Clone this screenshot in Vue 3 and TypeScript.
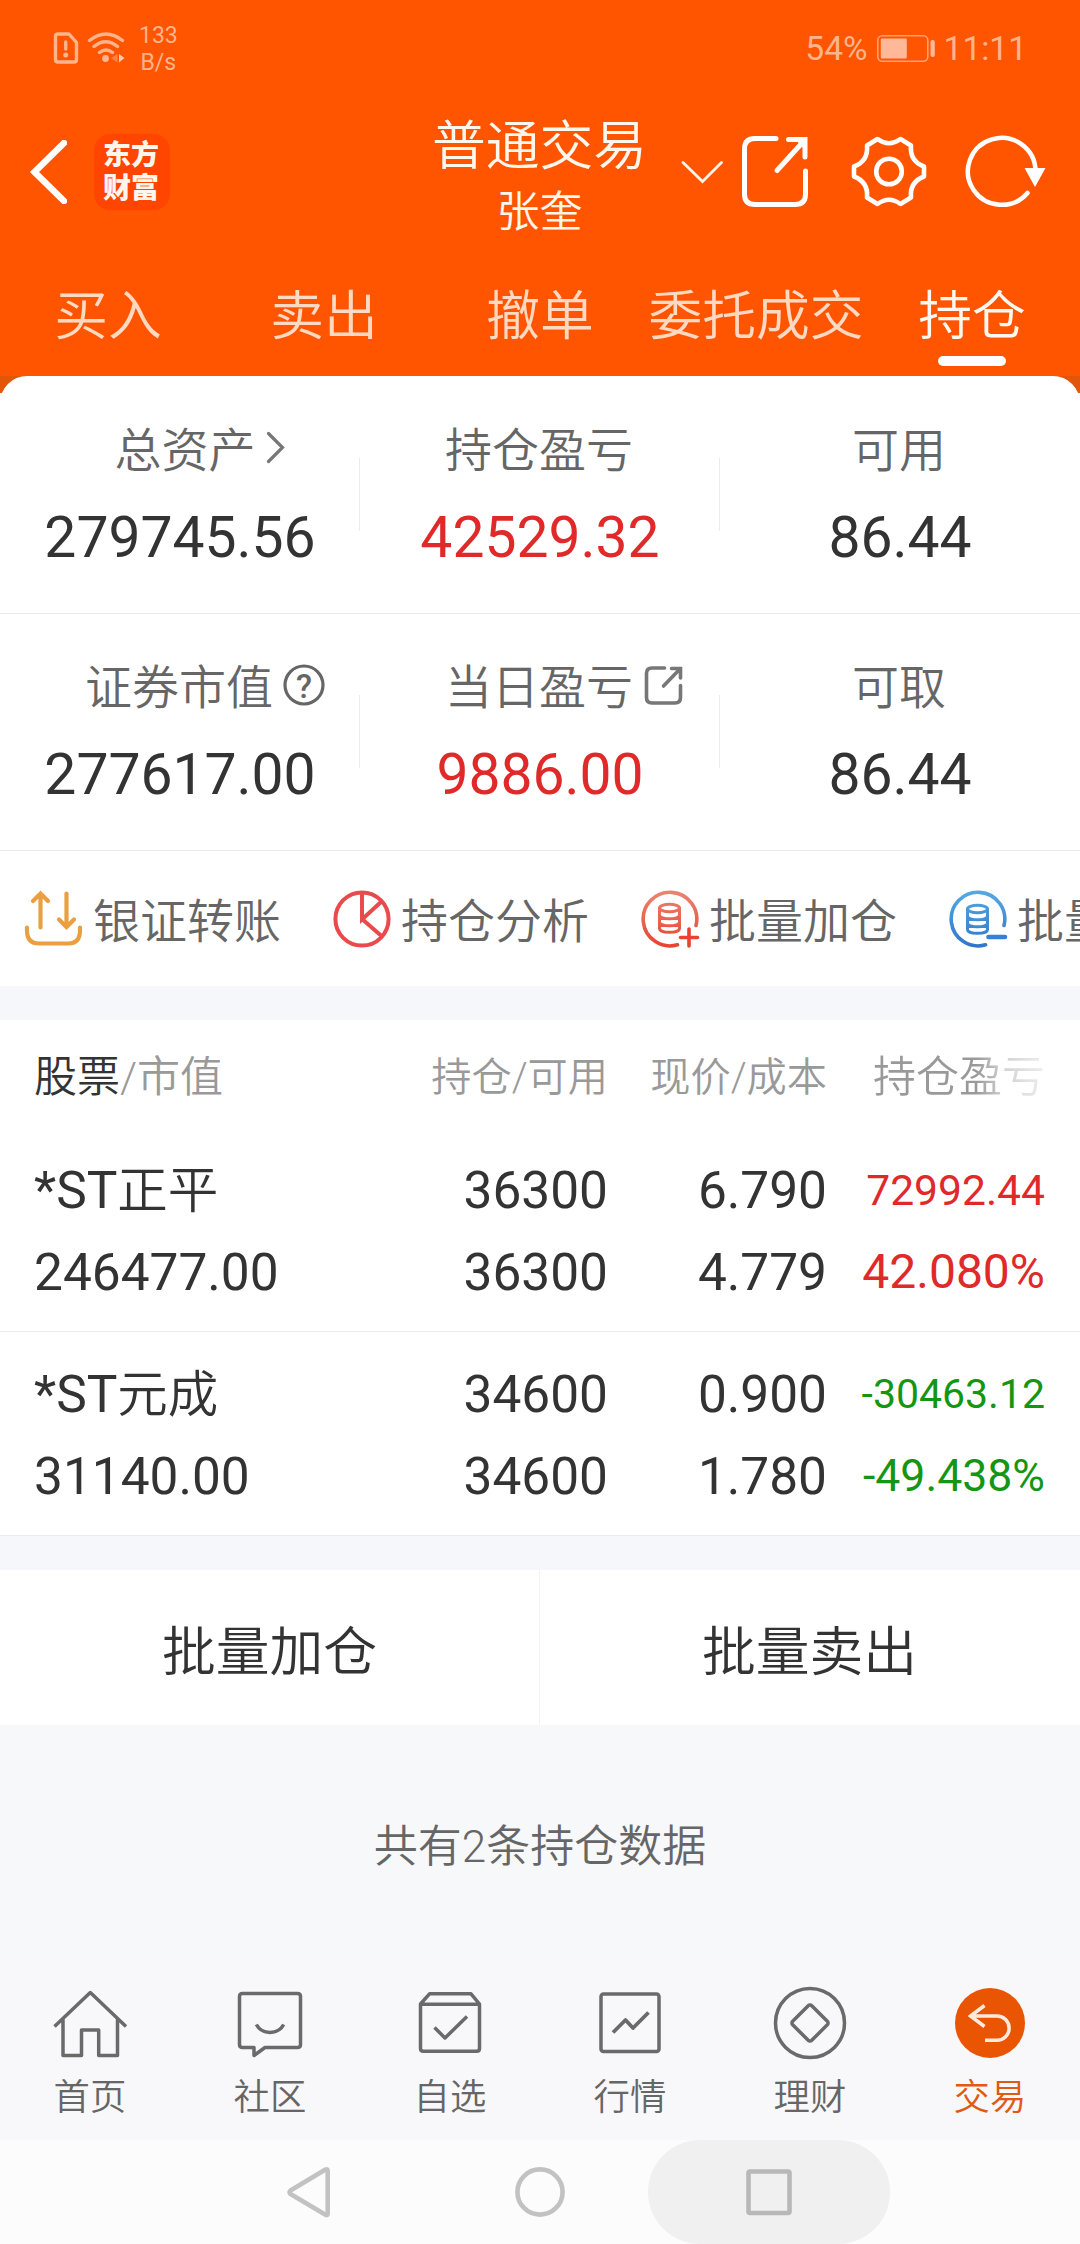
<script setup lang="ts">
interface Stat {
  label: string
  value: string
  tone?: 'up'
  icon?: 'chevron' | 'help' | 'share'
}
interface Holding {
  prefix: string
  name: string
  marketValue: string
  held: string
  available: string
  price: string
  cost: string
  profit: string
  profitSize: number
  rate: string
  rateSize: number
  tone: 'up' | 'down'
}

const tabs: string[] = ['买入', '卖出', '撤单', '委托成交', '持仓']
const activeTab = '持仓'

const statRows: Stat[][] = [
  [
    { label: '总资产', value: '279745.56', icon: 'chevron' },
    { label: '持仓盈亏', value: '42529.32', tone: 'up' },
    { label: '可用', value: '86.44' },
  ],
  [
    { label: '证券市值', value: '277617.00', icon: 'help' },
    { label: '当日盈亏', value: '9886.00', tone: 'up', icon: 'share' },
    { label: '可取', value: '86.44' },
  ],
]

const holdings: Holding[] = [
  {
    prefix: '*ST', name: '正平', marketValue: '246477.00', held: '36300', available: '36300',
    price: '6.790', cost: '4.779', profit: '72992.44', profitSize: 42.6, rate: '42.080%', rateSize: 48, tone: 'up',
  },
  {
    prefix: '*ST', name: '元成', marketValue: '31140.00', held: '34600', available: '34600',
    price: '0.900', cost: '1.780', profit: '-30463.12', profitSize: 41, rate: '-49.438%', rateSize: 44.6, tone: 'down',
  },
]
</script>

<template>
  <div class="screen">
    <header class="top">
      <div class="status">
        <div class="status-left">
          <svg width="72" height="34" viewBox="53 31 72 34" fill="none" stroke="#ffb48c" stroke-linecap="round">
            <path d="M58 34H69L76.500 42.500V59.500Q76.500 62 74 62H58Q55.500 62 55.500 59.500V36.500Q55.500 34 58 34Z" stroke-width="3.400" stroke-linejoin="round" />
            <path d="M65.700 42V49" stroke-width="3.400" />
            <circle cx="65.700" cy="55" r="2.500" fill="#ffb48c" stroke="none" />
            <path d="M89.500 40.500Q106 27.500 122.500 40.500M94 46.500Q106 37 117.500 46.500M99.500 52.500Q106 47.500 112.500 52.500" stroke-width="3.400" />
            <circle cx="105.500" cy="58.500" r="3.400" fill="#ffb48c" stroke="none" />
            <path d="M117.500 54V62.500L111 58Z" fill="#ff8040" stroke="none" />
            <path d="M119 54V62.500L124.500 58Z" fill="#ffc8a8" stroke="none" />
          </svg>
          <div class="speed"><span>133</span><span>B/s</span></div>
        </div>
        <div class="status-right">
          <span>54%</span>
          <svg width="60" height="30" viewBox="875 34 60 30">
            <rect x="876.800" y="35.800" width="50" height="25.500" rx="4.500" fill="none" stroke="#ffa070" stroke-width="1.600" />
            <rect x="879.800" y="38.500" width="26" height="20" rx="1" fill="#ffb898" />
            <rect x="929.500" y="40" width="4.300" height="17" rx="2" fill="#ffb898" />
          </svg>
          <span>11:11</span>
        </div>
      </div>

      <div class="titlebar">
        <div class="bar-left">
          <svg width="38" height="64" viewBox="29 140 38 64" fill="none" stroke="#fff" stroke-width="6.500">
            <path d="M64 143L34.500 172L64 201" stroke-linecap="round" stroke-linejoin="miter" />
          </svg>
          <div class="logo"><span>东方</span><span>财富</span></div>
        </div>
        <div class="bar-title">
          <div class="title">普通交易</div>
          <div class="owner">张奎</div>
        </div>
        <div class="bar-right">
          <svg class="drop" width="42" height="24" viewBox="681 159 42 24" fill="none" stroke="#fff3e6" stroke-width="2.800">
            <path d="M683 161.500L702.500 180.500L721.500 161.500" stroke-linecap="round" />
          </svg>
          <svg class="open" width="68" height="74" viewBox="741 135 68 74" fill="none" stroke="#fff" stroke-width="5" stroke-linecap="round">
            <path d="M776 138.500H755Q744.500 138.500 744.500 149V194Q744.500 204.500 755 204.500H795Q805.500 204.500 805.500 194V171" />
            <path d="M788.500 139.500H805V157M777 170.500L802.500 142.500" />
            <path d="M795 139H806V151Z" fill="#fff" stroke="none" />
          </svg>
          <svg class="gear" width="76" height="76" viewBox="851 134 76 76" fill="none" stroke="#fff" stroke-width="4.600" stroke-linejoin="round">
            <path d="M877.500 139Q889 147.500 900.500 139L911 145.500Q909.500 161 924 166.500V176.500Q909.500 182 911 197.500L900.500 204Q889 195.500 877.500 204L867 197.500Q868.500 182 854 176.500V166.500Q868.500 161 867 145.500Z" />
            <circle cx="889" cy="171.500" r="12.800" />
          </svg>
          <svg class="reload" width="82" height="74" viewBox="965 135 82 74" fill="none" stroke="#fff">
            <path d="M1035.500 171A33.800 33.500 0 1 0 1027.500 193" stroke-width="4.500" stroke-linecap="round" />
            <path d="M1024.500 168H1045.500L1035 187Z" fill="#fff" stroke="none" />
          </svg>
        </div>
      </div>

      <nav class="tabs">
        <div v-for="t in tabs" :key="t" class="tab" :class="{ active: t === activeTab }">{{ t }}</div>
      </nav>
    </header>

    <section class="summary">
      <div class="summary-card">
        <div v-for="(row, r) in statRows" :key="r" class="stat-row">
          <div v-for="s in row" :key="s.label" class="stat">
            <div class="stat-label" :class="s.icon">
              {{ s.label }}
              <svg v-if="s.icon === 'chevron'" class="mark" width="20" height="34" viewBox="266 431 20 34" fill="none" stroke="#777" stroke-width="3.200">
                <path d="M268.500 433.500L282.500 447.500L268.500 461.500" stroke-linecap="round" />
              </svg>
              <svg v-if="s.icon === 'help'" class="mark" width="44" height="44" viewBox="281.500 662.500 44 44">
                <circle cx="303.500" cy="684.500" r="19" fill="none" stroke="#666" stroke-width="3.200" />
                <text x="303.500" y="697" text-anchor="middle" class="q">?</text>
              </svg>
              <svg v-if="s.icon === 'share'" class="mark" width="40" height="40" viewBox="644 664 40 40" fill="none" stroke="#777" stroke-width="3.600" stroke-linecap="round">
                <path d="M664.500 667H652Q646.500 667 646.500 672.500V696.500Q646.500 702 652 702H675Q680.500 702 680.500 696.500V684.500" />
                <path d="M671.500 667.500H680.500V677M663.500 685L679 669" />
              </svg>
            </div>
            <div class="stat-value" :class="s.tone">{{ s.value }}</div>
          </div>
        </div>
      </div>
    </section>

    <section class="actions">
      <div class="action">
        <svg width="60" height="60" viewBox="25 888.500 60 60" fill="none" stroke="#eaa040" stroke-width="4.200" stroke-linecap="round">
          <path d="M41.500 893V927M34 900.500L41.500 893L49 900.500M67.500 893V926M60 919L67.500 926.500L75 919" />
          <path d="M28 927V930Q28 943 40 943H69Q81 943 81 930V927" />
        </svg>
        <span>银证转账</span>
      </div>
      <div class="action">
        <svg width="60" height="60" viewBox="332.500 888.500 60 60" fill="none" stroke="#ea4a4c" stroke-width="4">
          <circle cx="362.500" cy="918.500" r="26.600" />
          <path d="M362.500 891V919L382 901M362.500 918.500L382 935.500" />
        </svg>
        <span>持仓分析</span>
      </div>
      <div class="action">
        <svg width="60" height="60" viewBox="640.500 888.500 60 60" fill="none" stroke="url(#warm)" stroke-linecap="round">
          <defs>
            <linearGradient id="warm" gradientUnits="userSpaceOnUse" x1="0" y1="890" x2="0" y2="947">
              <stop offset="0" stop-color="#e98673" /><stop offset="1" stop-color="#e8432f" />
            </linearGradient>
          </defs>
          <path d="M696.500 925A26.800 26.800 0 1 0 678 944.300" stroke-width="3.600" />
          <g stroke-width="3">
            <ellipse cx="670" cy="907.500" rx="10" ry="3.800" />
            <path d="M660 907.500V928C660 933 680 933 680 928V907.500M660 914.500C660 919.500 680 919.500 680 914.500M660 921.500C660 926.500 680 926.500 680 921.500" />
          </g>
          <path d="M681 937H698M689.500 928.500V945.500" stroke="#e8432f" stroke-width="3.600" />
        </svg>
        <span>批量加仓</span>
      </div>
      <div class="action">
        <svg width="60" height="60" viewBox="640.500 888.500 60 60" fill="none" stroke="url(#cool)" stroke-linecap="round">
          <defs>
            <linearGradient id="cool" gradientUnits="userSpaceOnUse" x1="0" y1="890" x2="0" y2="947">
              <stop offset="0" stop-color="#55aae2" /><stop offset="1" stop-color="#2f76cc" />
            </linearGradient>
          </defs>
          <path d="M696.500 925A26.800 26.800 0 1 0 678 944.300" stroke-width="3.600" />
          <g stroke-width="3">
            <ellipse cx="670" cy="908.500" rx="10" ry="3.800" />
            <path d="M660 908.500V929C660 934 680 934 680 929V908.500M660 915.500C660 920.500 680 920.500 680 915.500M660 922.500C660 927.500 680 927.500 680 922.500" />
          </g>
          <path d="M681 936.500H697.500" stroke="#3482d6" stroke-width="4.600" />
        </svg>
        <span>批量卖出</span>
      </div>
    </section>

    <div class="band"></div>

    <section class="table">
      <div class="thead">
        <div class="c1"><b>股票</b><i>/</i>市值</div>
        <div class="c2">持仓<i>/</i>可用</div>
        <div class="c3">现价<i>/</i>成本</div>
        <div class="c4"><span class="fade">持仓盈亏</span></div>
      </div>
      <div v-for="h in holdings" :key="h.name" class="holding">
        <div class="c1"><span>{{ h.prefix }}<em>{{ h.name }}</em></span><span>{{ h.marketValue }}</span></div>
        <div class="c2"><span>{{ h.held }}</span><span>{{ h.available }}</span></div>
        <div class="c3"><span>{{ h.price }}</span><span>{{ h.cost }}</span></div>
        <div class="c4" :class="h.tone">
          <span :style="{ fontSize: h.profitSize + 'px' }">{{ h.profit }}</span>
          <span :style="{ fontSize: h.rateSize + 'px' }">{{ h.rate }}</span>
        </div>
      </div>
    </section>

    <div class="band"></div>

    <section class="batch">
      <div>批量加仓</div>
      <div>批量卖出</div>
    </section>

    <div class="count">共有<i>2</i>条持仓数据</div>

    <nav class="bottom">
      <div class="item">
        <svg width="76" height="74" viewBox="52 1986 76 74">
          <path d="M54.500 2026.500L90.300 1992.500L126 2026.500M63 2019.500V2055.500H81.500V2030H98.700V2055.500H117.500V2019.500" />
        </svg>
        <span>首页</span>
      </div>
      <div class="item">
        <svg width="76" height="74" viewBox="232 1986 76 74">
          <path d="M242.500 1993.500H297.500Q300.500 1993.500 300.500 1996.500V2044.500Q300.500 2047.500 297.500 2047.500H265L254 2055.500V2047.500H242.500Q239.500 2047.500 239.500 2044.500V1996.500Q239.500 1993.500 242.500 1993.500Z" />
          <path d="M256.300 2024.500C262 2035 278 2035 283.700 2024.500" />
        </svg>
        <span>社区</span>
      </div>
      <div class="item">
        <svg width="76" height="74" viewBox="411.500 1986 76 74">
          <path d="M420 2004L429 1993.800H470.500L479 2004V2048.500Q479 2051.300 476 2051.300H423Q420 2051.300 420 2048.500ZM420 2004.200H479" />
          <path d="M434 2027.500L444.500 2038L466.500 2016.500" />
        </svg>
        <span>自选</span>
      </div>
      <div class="item">
        <svg width="76" height="74" viewBox="592 1986 76 74">
          <rect x="601" y="1994" width="58" height="57.500" rx="2.500" />
          <path d="M613 2032.500L625.500 2020L633 2028L648.500 2012.500" stroke-width="3.800" />
        </svg>
        <span>行情</span>
      </div>
      <div class="item">
        <svg width="76" height="74" viewBox="772 1986 76 74">
          <circle cx="810" cy="2023" r="34.500" />
          <rect x="796.500" y="2009.500" width="27" height="27" rx="2.500" transform="rotate(45 810 2023)" />
        </svg>
        <span>理财</span>
      </div>
      <div class="item current">
        <svg width="76" height="74" viewBox="952 1986 76 74">
          <circle cx="990" cy="2023" r="35" fill="#ea5504" stroke="none" />
          <path d="M984.500 2005.500L970.500 2016L984.500 2026.500M971 2016H997A12 12 0 0 1 997 2040.300H985" stroke="#ffeadb" stroke-linecap="butt" stroke-linejoin="miter" />
        </svg>
        <span>交易</span>
      </div>
    </nav>

    <footer class="sysbar">
      <svg class="sys-back" width="46" height="52" viewBox="286 2166 46 52">
        <path d="M325.500 2169.500Q327.700 2168.500 327.700 2171V2213.500Q327.700 2216 325.500 2214.800L290.500 2194Q288.500 2192.200 290.500 2190.500Z" />
      </svg>
      <svg class="sys-home" width="52" height="52" viewBox="514 2166 52 52"><circle cx="540" cy="2192" r="22.600" /></svg>
      <div class="sys-recent">
        <svg width="48" height="48" viewBox="745 2168 48 48"><rect x="748.500" y="2171.500" width="41" height="41.500" rx="1.500" /></svg>
      </div>
    </footer>
  </div>
</template>

<style>
body {
  margin: 0;
  background: #f7f8fa;
}
</style>

<style scoped>
.screen {
  width: 1080px;
  height: 2244px;
  overflow: hidden;
  display: flex;
  flex-direction: column;
  background: #f7f8fa;
  font-family: 'Noto Sans CJK SC', sans-serif;
  font-weight: 350;
  color: #333;
  white-space: nowrap;
}
svg {
  display: block;
  flex: none;
}
i,
em {
  font-style: normal;
}
.top {
  height: 376px;
  background: #ff5500;
}
.status {
  height: 94px;
  display: flex;
  justify-content: space-between;
  font-family: Roboto, sans-serif;
  font-weight: 400;
  color: #ffb48c;
}
.status-left {
  display: flex;
  padding: 31px 0 0 53px;
}
.speed {
  display: flex;
  flex-direction: column;
  align-items: center;
  margin: -9px 0 0 14px;
  font-size: 23px;
  line-height: 27px;
}
.status-right {
  display: flex;
  gap: 8px;
  padding: 34px 53px 0 0;
  font-size: 33.5px;
  line-height: 30px;
}
.titlebar {
  height: 156px;
  display: grid;
  grid-template-columns: 431px 217px 432px;
  color: #fff6ec;
}
.bar-left {
  display: flex;
  align-items: center;
  gap: 27px;
  padding-left: 29px;
}
.logo {
  width: 76px;
  height: 76px;
  border-radius: 16px;
  background: #ff4500;
  display: flex;
  flex-direction: column;
  justify-content: center;
  align-items: center;
  font-size: 28px;
  line-height: 33px;
  font-weight: 900;
  padding-bottom: 5px;
  padding-right: 2px;
  box-sizing: border-box;
}
.bar-title {
  padding-top: 18px;
  text-align: center;
}
.title {
  font-size: 53.8px;
  line-height: 60px;
}
.owner {
  margin-top: 11px;
  font-size: 43px;
  line-height: 50px;
}
.bar-right {
  display: flex;
  align-items: center;
  padding-left: 33px;
}
.open {
  margin-left: 18px;
}
.gear {
  margin-left: 42px;
}
.reload {
  margin-left: 38px;
}
.tabs {
  display: flex;
  padding-top: 32px;
}
.tab {
  flex: 1;
  display: flex;
  flex-direction: column;
  align-items: center;
  font-size: 53.8px;
  line-height: 60px;
  color: #ffd9c2;
}
.tab.active {
  color: #fff8f0;
}
.tab.active::after {
  content: '';
  width: 68px;
  height: 10px;
  margin-top: 14px;
  border-radius: 5px;
  background: #fff;
}
.summary {
  background: linear-gradient(#e2560c 17px, #fff 17px);
}
.summary-card {
  background: #fff;
  border-radius: 27px 27px 0 0;
}
.stat-row {
  display: flex;
  height: 237px;
  box-sizing: border-box;
  padding-top: 43px;
  border-bottom: 1px solid #ebebeb;
}
.stat-row:first-child {
  height: 238px;
  padding-top: 44px;
}
.stat {
  position: relative;
  flex: 1;
  display: flex;
  flex-direction: column;
  align-items: center;
}
.stat + .stat::before {
  content: '';
  position: absolute;
  left: -1px;
  top: 38px;
  width: 1px;
  height: 73px;
  background: #ebebeb;
}
.stat-label {
  position: relative;
  left: -1px;
  font-size: 47px;
  line-height: 54px;
  color: #666;
}
.stat-label.chevron {
  left: 5px;
}
.mark {
  position: absolute;
  left: calc(100% + 10px);
  top: 11px;
}
.help .mark {
  left: calc(100% + 9px);
  top: 6px;
}
.share .mark {
  left: calc(100% + 11px);
  top: 8px;
}
.q {
  font: 500 33px Roboto, sans-serif;
  fill: #666;
}
.stat-value {
  margin-top: 34px;
  font: 400 57px/60px Roboto, sans-serif;
}
.up {
  color: #e02a2a;
}
.down {
  color: #149614;
}
.actions {
  display: flex;
  height: 135px;
  align-items: center;
  padding-left: 24px;
  overflow: hidden;
  background: #fff;
}
.action {
  display: flex;
  align-items: center;
  flex: none;
  width: 308px;
  gap: 9px;
  font-size: 47px;
  line-height: 60px;
  color: #666;
}
.action span {
  margin-top: -2px;
}
.band {
  height: 34px;
  background: #f6f7fa;
}
.table {
  background: #fff;
}
.thead,
.holding {
  display: grid;
  grid-template-columns: 366px 208px 219px 218px;
  padding-left: 34px;
}
.thead {
  height: 108px;
  line-height: 108px;
  font-size: 40.2px;
  color: #999;
}
.thead i {
  font-family: Roboto, sans-serif;
  font-weight: 300;
  line-height: 0;
}
.thead .c1,
.thead .c4 {
  font-size: 43px;
  line-height: 107px;
}
.thead b {
  font-weight: 350;
  color: #333;
}
.c2,
.c3,
.c4 {
  text-align: right;
}
.fade {
  background: linear-gradient(90deg, #999 60%, #d2d2d2 76%, #eee 100%);
  background-clip: text;
  -webkit-background-clip: text;
  color: transparent;
}
.holding {
  height: 204px;
  box-sizing: border-box;
  padding-top: 22px;
  border-bottom: 1px solid #ebebeb;
  font: 400 51.4px/82px Roboto, sans-serif;
}
.holding span {
  display: block;
  height: 82px;
}
.holding .c4 {
  margin-top: -1px;
}
.holding em {
  font: 350 50.5px/0 'Noto Sans CJK SC', sans-serif;
}
.batch {
  display: flex;
  height: 155px;
  background: #fff;
  font-size: 53.8px;
  line-height: 155px;
  text-align: center;
}
.batch div {
  flex: 1;
  text-indent: -1px;
}
.batch div + div {
  box-shadow: -1px 0 #f4f4f5;
}
.count {
  height: 235px;
  box-sizing: border-box;
  padding-top: 88px;
  text-align: center;
  font-size: 44px;
  line-height: 60px;
  color: #666;
}
.count i {
  font-family: Roboto, sans-serif;
  font-weight: 300;
  line-height: 0;
}
.bottom {
  display: flex;
  height: 180px;
  background: #f8f8fa;
}
.item {
  flex: 1;
  display: flex;
  flex-direction: column;
  align-items: center;
  gap: 12px;
  padding-top: 26px;
  font-size: 36.400px;
  line-height: 44px;
  color: #666;
}
.item svg {
  fill: none;
  stroke: #6a6a6a;
  stroke-width: 3.5px;
  stroke-linejoin: round;
}
.current {
  color: #e05a14;
}
.sysbar {
  display: flex;
  align-items: center;
  height: 104px;
  padding-left: 286px;
  background: #fcfcfc;
}
.sysbar svg {
  fill: none;
  stroke: #c2c2c2;
  stroke-width: 4.6px;
  stroke-linejoin: round;
}
.sys-home {
  margin-left: 182px;
}
.sys-recent {
  display: flex;
  align-items: center;
  justify-content: center;
  width: 242px;
  height: 104px;
  margin-left: 82px;
  border-radius: 52px;
  background: #f0f0f0;
}
.sysbar .sys-recent svg {
  stroke: #b8b8b8;
}
</style>
